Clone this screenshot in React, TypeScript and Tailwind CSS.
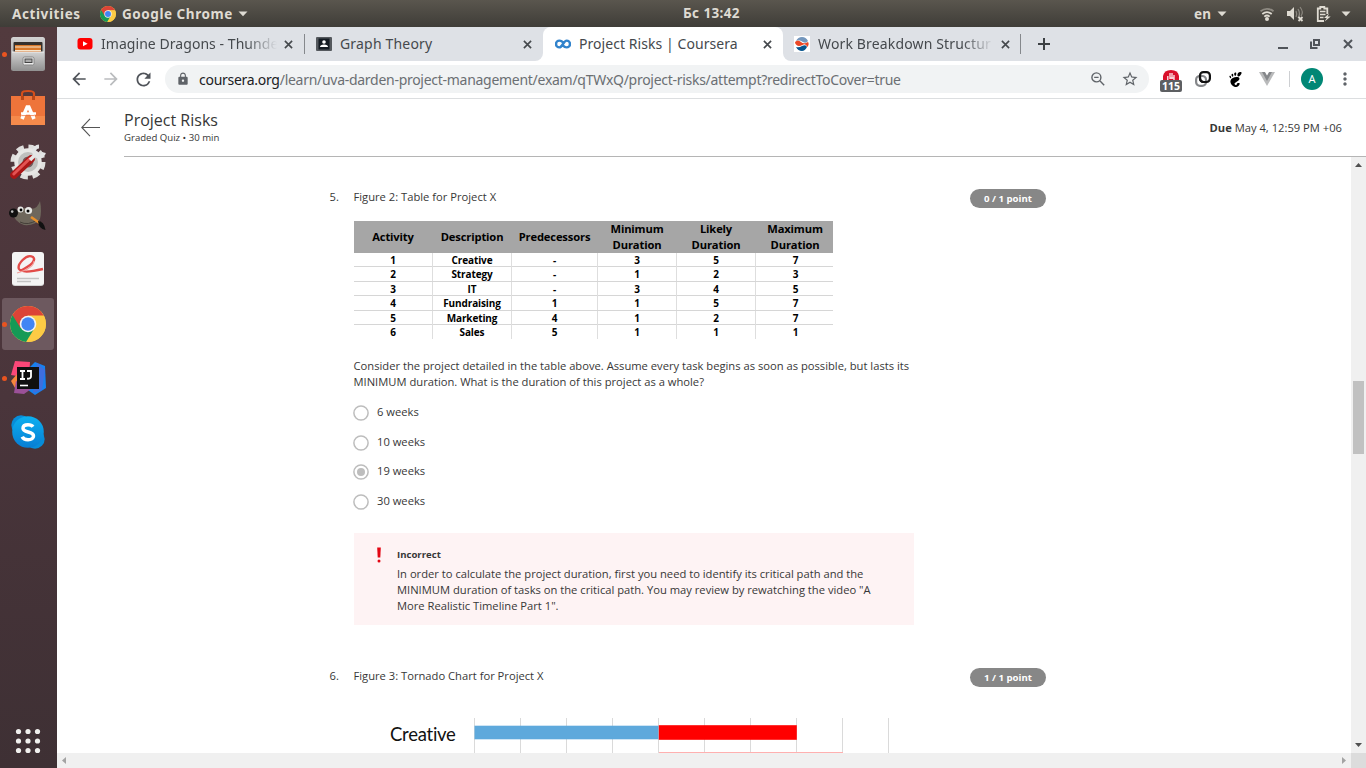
import React from "react";
import {
  MdArrowBack,
  MdArrowForward,
  MdRefresh,
  MdLock,
  MdStarBorder,
  MdMoreVert,
} from "react-icons/md";
import { SiGnome } from "react-icons/si";

function ChromeLogo({ className }: { className: string }) {
  return (
    <svg viewBox="0 0 36 36" className={className}>
      <circle cx="18" cy="18" r="18" fill="#fccb45" />
      <path d="M18 18 L2.4 9 A18 18 0 0 0 16 35.9 L24 23 Z" fill="#159a56" />
      <path d="M18 0 A18 18 0 0 1 33.8 9.5 L18 9.5 L10.5 22 L2.4 9 A18 18 0 0 1 18 0Z" fill="#dc4437" />
      <path d="M18 10H34A18 18 0 0 1 17 36L25.5 22Z" fill="#fccb45" />
      <circle cx="18" cy="18" r="8.3" fill="#f4f4f4" />
      <circle cx="18" cy="18" r="6.7" fill="#4285f4" />
    </svg>
  );
}

function Caret() {
  return (
    <svg viewBox="0 0 10 6" className="h-[6px] w-[10px]">
      <path d="M0.5 0.5h9L5 5.3z" fill="#dedbd3" />
    </svg>
  );
}

function TopBar() {
  return (
    <header className="flex h-[27px] shrink-0 items-center bg-linear-to-b from-[#5a564e] to-[#3f3d38] font-['Noto_Sans',sans-serif] text-[13.5px] font-bold text-[#dfdbd2]">
      <span className="ml-3 w-[88px] pt-px tracking-[0.6px]">Activities</span>
      <ChromeLogo className="size-4" />
      <span className="ml-[6px] w-[116px] pt-px tracking-[0.55px]">Google Chrome</span>
      <Caret />
      <span className="ml-[435px] w-[511px] tracking-[0.35px]">Бс 13:42</span>
      <span className="w-[23px] pt-px tracking-[0.3px]">en</span>
      <Caret />
      <svg viewBox="0 0 16 16" className="ml-[32px] size-4" fill="none" stroke="#dfdbd2" strokeWidth="1.8">
        <path d="M1.5 5.2Q8 0.4 14.5 5.2" stroke="#8d8981" />
        <path d="M3.3 8Q8 4.4 12.7 8" />
        <path d="M5.3 10.6Q8 8.5 10.7 10.6" />
        <circle cx="8" cy="13" r="2" fill="#dfdbd2" stroke="none" />
      </svg>
      <svg viewBox="0 0 18 16" className="ml-[12px] h-4 w-[18px]" fill="none" stroke="#8d8981" strokeWidth="1.2">
        <path d="M0 5h3l4-4v13l-4-4H0z" fill="#dfdbd2" stroke="none" />
        <path d="M9 5q1.5 3 0 6M11 3q3 4.5 0 9M13 1q4 5 1 9" />
        <path d="M11.5 11l4 4M15.5 11l-4 4" stroke="#dfdbd2" strokeWidth="1.8" />
      </svg>
      <svg viewBox="0 0 16 16" className="ml-[11px] size-4" fill="none" stroke="#dfdbd2" strokeWidth="1.8">
        <path d="M8 15H1.8V2.5h2.5V1h4v1.5h3V8" />
        <path d="M4 5.5h5.5M4 8.5h5.5M4 11.5h3.5" strokeWidth="1.5" />
        <path d="M13 7.5l-5 4.5h2.7l-2 3.5 6-5h-3z" fill="#dfdbd2" stroke="none" />
      </svg>
      <span className="ml-[9px] flex">
        <Caret />
      </span>
    </header>
  );
}

function DockItem({ running, active, children }: { running?: boolean; active?: boolean; children: React.ReactNode }) {
  return (
    <div className={active ? "relative ml-[2px] flex h-[52px] w-[52px] items-center justify-center rounded-[3px] bg-[#6d595f]" : "relative ml-[2px] flex h-[52px] w-[52px] items-center justify-center"}>
      {running && <span className="absolute top-[24px] left-0 size-[5px] rounded-full bg-[#e95420]" />}
      {children}
    </div>
  );
}

const icon = "size-[36px] overflow-visible";

function Dock() {
  return (
    <nav className="flex w-[57px] shrink-0 flex-col gap-[2px] bg-linear-to-b from-[#523a3e] via-[#4a353b] to-[#3e3034] pt-px">
      <DockItem running>
        <svg viewBox="0 0 36 36" className={icon}>
          <defs>
            <linearGradient id="cab" x2="0" y2="1"><stop stopColor="#d2d2d2" /><stop offset="1" stopColor="#929292" /></linearGradient>
          </defs>
          <rect x="1" y="1" width="34" height="34" rx="2.5" fill="url(#cab)" />
          <rect x="3.5" y="6" width="29" height="12" rx="1" fill="#35302c" />
          <path d="M5 9h26v8H5z" fill="#d9792a" />
          <path d="M5 11h26M5 14.5h26" stroke="#f7e5cc" strokeWidth="1.2" />
          <path d="M2 16h32v18H2z" fill="url(#cab)" />
          <path d="M2 16h32" stroke="#eee" />
          <rect x="13" y="21" width="11" height="8" rx="1.5" fill="#ececec" stroke="#858585" />
          <rect x="15" y="23" width="7" height="3.5" fill="#aaa" stroke="#444" />
        </svg>
      </DockItem>
      <DockItem>
        <svg viewBox="0 0 36 36" className={icon}>
          <path d="M12 9V3.5Q12 1 18 1t6 2.5V9" fill="none" stroke="#d54f1b" strokeWidth="2.2" />
          <path d="M1 6h34v28a1 1 0 0 1-1 1H2a1 1 0 0 1-1-1z" fill="#ee743a" />
          <path d="M1 26h34v9H1z" fill="#f58a4b" />
          <path d="M11 6h3v4h-3zM22 6h3v4h-3z" fill="#b94717" />
          <path d="M12 29L17.2 17h1.6L24 29" fill="none" stroke="#fff" strokeWidth="3.6" />
          <path d="M11 23.5h15" stroke="#fff" strokeWidth="2.5" />
          <path d="M12 25.6h12" stroke="#eb7440" strokeWidth="0.8" />
        </svg>
      </DockItem>
      <DockItem>
        <svg viewBox="0 0 36 36" className={icon}>
          <circle cx="18" cy="18" r="15.2" fill="none" stroke="#dfdfdd" strokeWidth="4.6" strokeDasharray="7.2 4.738" />
          <circle cx="18" cy="18" r="10" fill="#c8c9c7" stroke="#e7e7e5" strokeWidth="7.5" />
          <circle cx="18" cy="18" r="8" fill="none" stroke="#bfc0be" strokeWidth="4" />
          <circle cx="18" cy="18" r="5.5" fill="#705d5d" />
          <path d="M4 31L21 15" stroke="#aa1717" strokeWidth="7.5" strokeLinecap="round" />
          <path d="M3.8 30L20 14.5" stroke="#e35353" strokeWidth="3" strokeLinecap="round" />
          <path d="M20 16L28 8" stroke="#e6e6e6" strokeWidth="3.5" />
          <path d="M29 2.5a5 5 0 1 0 5 6" fill="none" stroke="#e3e5e5" strokeWidth="3.8" />
        </svg>
      </DockItem>
      <DockItem>
        <svg viewBox="0 0 36 36" className={icon}>
          <path d="M30 3Q27 12 20 10.5 13 9 9 12L2 13Q4 24 14 27 25 28 30 21 32 13 30 3Z" fill="#6e675c" />
          <path d="M10 24Q18 28 27 22" stroke="#443e38" fill="none" />
          <circle cx="10.5" cy="11.5" r="3" fill="#e9e9e6" /><circle cx="18.5" cy="12.5" r="3.6" fill="#e9e9e6" />
          <circle cx="11" cy="12" r="1.4" /><circle cx="18" cy="13" r="1.5" />
          <circle cx="3.5" cy="15" r="4.5" fill="#101010" /><circle cx="2.2" cy="13.6" r="1.3" fill="#bbb" />
          <path d="M21 19l10 7" stroke="#e7902d" strokeWidth="2.6" />
          <path d="M28 23q6 0 7.5 9-7-1-7.5-9z" fill="#111" />
        </svg>
      </DockItem>
      <DockItem>
        <svg viewBox="0 0 36 36" className={icon}>
          <rect x="2" y="2" width="32" height="32" rx="3" fill="#d0d0d0" />
          <rect x="2" y="0" width="32" height="33" rx="3" fill="#f4f4f4" />
          <path d="M10 19Q28 10 23 5C16 1 7 13 9 17Q12 22 33 17" fill="none" stroke="#e24b48" strokeWidth="2.4" />
          <path d="M7 21Q24 16 24 9" fill="none" stroke="#f2a09c" strokeWidth="1.2" />
          <path d="M7 26.5h22M7 29.5h14" stroke="#c3c3c3" strokeWidth="1.3" />
        </svg>
      </DockItem>
      <DockItem running active>
        <ChromeLogo className={icon} />
      </DockItem>
      <DockItem running>
        <svg viewBox="0 0 36 36" className={icon}>
          <path d="M5 1L20 2 19 18 1 15z" fill="#fb4778" />
          <path d="M1 21l7-8 5 12-8 3z" fill="#f6863c" />
          <path d="M19 8l6-6 10 4 1 22-11 7-7-5z" fill="#1681f0" />
          <path d="M27 3l8 7-3 20-9 3z" fill="#3f6edd" />
          <path d="M4 33l2-12 15 8-7 5z" fill="#9b5198" />
          <path d="M7 7h22v22H7z" fill="#101010" />
          <path d="M10 11h5M12.5 11v8M10 19h5M17 11h4v5.5q0 2.5-4 2.2" fill="none" stroke="#fff" strokeWidth="1.8" />
          <path d="M10 25.5h8" stroke="#fff" strokeWidth="1.6" />
        </svg>
      </DockItem>
      <DockItem>
        <svg viewBox="0 0 36 36" className={icon}>
          <defs><linearGradient id="sky" x2="0" y2="1"><stop stopColor="#0bb0f0" /><stop offset="1" stopColor="#087dd4" /></linearGradient></defs>
          <circle cx="11" cy="11" r="9.7" fill="#078dd9" /><circle cx="25" cy="25" r="9.7" fill="#078dd9" />
          <circle cx="18" cy="18" r="15.8" fill="url(#sky)" />
          <path d="M23 12.8Q21.5 10.7 18 10.7c-4 0-5 2-5 3.5 0 5 10.5 2.5 10.5 7.8 0 2-2 3.8-5.5 3.8-3.3 0-5-1.3-5.8-3" fill="none" stroke="#fff" strokeWidth="3.5" />
        </svg>
      </DockItem>
      <svg viewBox="0 0 26 26" className="mt-auto mb-[14px] ml-[15px] size-[26px]" fill="#f1f0ee">
        {[3.5, 13, 22.5].map((y) => [3.5, 13, 22.5].map((x) => <circle key={`${x}-${y}`} cx={x} cy={y} r="2.6" />))}
      </svg>
    </nav>
  );
}

function CloseX({ className }: { className: string }) {
  return (
    <svg viewBox="0 0 10 10" className={className} stroke="#45494d" strokeWidth="1.8">
      <path d="M1 1l8 8M9 1l-8 8" />
    </svg>
  );
}

function TabStrip() {
  return (
    <div className="flex h-[34px] bg-white font-['Noto_Sans',sans-serif] text-[14px] text-[#45494d]">
      <div className="flex w-[486px] items-center rounded-br-[8px] bg-[#dee1e6]">
        <svg viewBox="0 0 16 12" className="ml-[20px] h-3 w-4">
          <rect width="15" height="11.5" x="0.5" rx="3" fill="#f00" /><path d="M6 3.2v5l4.6-2.5z" fill="#fff" />
        </svg>
        <div className="ml-2 w-[176px] overflow-hidden mask-r-from-82% pb-[2px] tracking-[0.05px] whitespace-nowrap">Imagine Dragons - Thunde</div>
        <CloseX className="ml-[7px] size-[9px]" />
        <div className="ml-[11px] h-5 w-px bg-[#85888c]" />
        <svg viewBox="0 0 16 16" className="ml-[11px] size-4">
          <rect y="1" width="16" height="14" rx="1" fill="#55595e" /><rect x="2.5" y="2.5" width="11" height="11" fill="#151c23" />
          <circle cx="8" cy="6" r="1.8" fill="#fff" /><path d="M4 11q0-2.5 4-2.5t4 2.5z" fill="#fff" />
        </svg>
        <div className="ml-2 w-[183px] pb-[2px] tracking-[0.18px] whitespace-nowrap">Graph Theory</div>
        <CloseX className="size-[9px]" />
      </div>
      <div className="w-[240px] bg-[#dee1e6]">
        <div className="flex h-full items-center rounded-t-[8px] bg-white">
          <svg viewBox="0 0 16 10" className="ml-3 h-[10px] w-4" fill="none" stroke="#3183cc" strokeWidth="2.4">
            <path d="M8.3 4C7.2 2 6 1.6 4.4 1.6a3.4 3.4 0 0 0 0 6.8C7.4 8.4 8.6 1.6 11.6 1.6a3.4 3.4 0 0 1 0 6.8C10.2 8.4 9 7.8 8 6.6" />
          </svg>
          <div className="ml-2 w-[184px] pb-[2px] tracking-[0.06px] whitespace-nowrap">Project Risks | Coursera</div>
          <CloseX className="size-[9px]" />
        </div>
      </div>
      <div className="flex flex-1 items-center rounded-bl-[8px] bg-[#dee1e6]">
        <svg viewBox="0 0 16 16" className="ml-[11px] size-4">
          <rect width="16" height="16" fill="#fff" />
          <path d="M2 5Q4 1 8 1t6 4q-2 3-5 1Q5 3 2 5z" fill="#7497bd" />
          <path d="M1 6q3-3 6 0 2 2 5 1l2-1q1.5 2-.5 5-2-4-5-2-4 2-6 0Q1 8 1 6z" fill="#eb4826" />
          <path d="M2 11q3 1 6-1 4-2 5 1-2 4-5 4-4 0-6-4z" fill="#07558e" />
        </svg>
        <div className="ml-2 w-[176px] overflow-hidden mask-r-from-82% pb-[2px] tracking-[0.15px] whitespace-nowrap">Work Breakdown Structur</div>
        <CloseX className="ml-[7px] size-[9px]" />
        <div className="ml-[10px] h-5 w-px bg-[#85888c]" />
        <svg viewBox="0 0 12 12" className="ml-[17px] size-3" stroke="#3c4043" strokeWidth="2"><path d="M6 0v12M0 6h12" /></svg>
        <svg viewBox="0 0 10 10" className="mr-[22px] ml-auto size-[10px]" stroke="#50545a" strokeWidth="2"><path d="M0 9h10" /></svg>
        <svg viewBox="0 0 10 10" className="mr-[23px] size-[10px]" fill="none" stroke="#50545a" strokeWidth="2"><path d="M4 1h5v5H4zM1 2.5V9h6.5" /></svg>
        <svg viewBox="0 0 10 10" className="mr-[13px] size-[10px]" stroke="#50545a" strokeWidth="2"><path d="M1 1l8 8M9 1l-8 8" /></svg>
      </div>
    </div>
  );
}

function Toolbar() {
  return (
    <div className="flex h-[38px] items-center border-b border-[#dcdee0] pb-px text-[#5f6368]">
      <MdArrowBack className="ml-3 size-5 text-[#50545a]" />
      <MdArrowForward className="ml-3 size-5 text-[#babcbe]" />
      <MdRefresh className="ml-[12px] size-[21px] text-[#50545a]" />
      <div className="ml-[11px] flex h-7 w-[984px] items-center rounded-full bg-[#f1f3f4]">
        <MdLock className="ml-[11px] size-[14px]" />
        <span className="ml-[9px] w-[892px] font-['Noto_Sans',sans-serif] text-[14px] tracking-[-0.28px] whitespace-nowrap text-[#6b6f73]">
          <span className="text-[#202124]">coursera.org</span>/learn/uva-darden-project-management/exam/qTWxQ/project-risks/attempt?redirectToCover=true
        </span>
        <svg viewBox="0 0 14 14" className="size-[14px] shrink-0" fill="none" stroke="#5f6368" strokeWidth="1.4">
          <circle cx="5.4" cy="5.4" r="4.5" />
          <path d="M3.2 5.4h4.4M8.8 8.8l4.4 4.4" />
        </svg>
        <MdStarBorder className="ml-[16px] size-[18px] shrink-0" />
      </div>
      <div className="ml-[11px] flex h-full w-[22px] flex-col items-center pt-[9px]">
        <svg viewBox="0 0 16 10" className="h-[10px] w-4 shrink-0">
          <path d="M0 10V6Q1 0 8 0t8 6v4z" fill="#d9102b" />
          <path d="M4.8 10V6M7 9V3M9 9V3M11 10V5M7 8h4" stroke="#fff" strokeWidth="1.2" />
        </svg>
        <span className="flex h-3 w-[22px] shrink-0 items-center justify-center rounded-[2px] bg-[#5d5f62] font-['Noto_Sans',sans-serif] text-[10.5px] leading-none font-bold text-white">115</span>
      </div>
      <svg viewBox="0 0 16 16" className="ml-[13px] size-4" fill="none" strokeWidth="2.2">
        <rect x="1.1" y="5" width="9.9" height="9.9" rx="3.8" stroke="#85878a" />
        <rect x="5" y="1.1" width="9.9" height="9.9" rx="3.4" stroke="#111" />
        <path d="M5 6v1q0 4 4 4" stroke="#111" />
      </svg>
      <SiGnome className="ml-[17px] size-[15px] text-black" />
      <svg viewBox="0 0 16 14" className="ml-[16px] h-[14px] w-4">
        <path d="M0 0h16L8 14z" fill="#b9babb" /><path d="M3 0h3.5L8 3l1.5-3H13L8 9z" fill="#85878a" /><path d="M6 0h4L8 3.5z" fill="#fff" />
      </svg>
      <div className="ml-[14px] h-4 w-px bg-[#cdcfd2]" />
      <span className="ml-[11px] flex size-[22px] items-center justify-center rounded-full bg-[#018775] font-['Noto_Sans',sans-serif] text-[11px] text-white">A</span>
      <MdMoreVert className="ml-[12px] size-[20px]" />
    </div>
  );
}

function Pill({ children }: { children: React.ReactNode }) {
  return (
    <span className="flex h-[19px] w-[76px] items-center justify-center rounded-full bg-[#878787] text-[9.6px] font-bold text-white">{children}</span>
  );
}

function QuestionHead({ number, title, score }: { number: string; title: string; score: string }) {
  return (
    <div className="flex h-4 items-start leading-4">
      <span className="w-6">{number}</span>
      <span className="w-[616.5px]">{title}</span>
      <Pill>{score}</Pill>
    </div>
  );
}

const rows = [
  ["1", "Creative", "-", "3", "5", "7"],
  ["2", "Strategy", "-", "1", "2", "3"],
  ["3", "IT", "-", "3", "4", "5"],
  ["4", "Fundraising", "1", "1", "5", "7"],
  ["5", "Marketing", "4", "1", "2", "7"],
  ["6", "Sales", "5", "1", "1", "1"],
];

const columns = "grid grid-cols-[79px_79px_86px_79px_79px_77px]";

function ActivityTable() {
  return (
    <div className="mt-4 ml-[24px] w-[479px] text-center font-['Open_Sans',sans-serif] text-[10px] font-bold tracking-[-0.12px] text-black">
      <div className={`${columns} h-8 items-center bg-[#a6a6a6] text-[11.2px] leading-4 tracking-[-0.15px]`}>
        <span className="-mt-px">Activity</span>
        <span className="-mt-px">Description</span>
        <span className="-mt-px">Predecessors</span>
        <span className="-mt-px">Minimum<br />Duration</span>
        <span className="-mt-px">Likely<br />Duration</span>
        <span className="-mt-px pl-[2px]">Maximum<br />Duration</span>
      </div>
      {rows.map((row) => (
        <div key={row[0]} className={`${columns} h-[14.4px] border-b border-[#d6d6d6] leading-[14px] last:border-b-0`}>
          {row.map((cell, i) => (
            <span key={i} className="border-r border-[#dedede] pl-px last:border-r-0 last:pl-[3px]">{cell}</span>
          ))}
        </div>
      ))}
    </div>
  );
}

function Option({ label, selected }: { label: string; selected?: boolean }) {
  return (
    <label className="flex h-[29.7px] items-center gap-2">
      <svg viewBox="0 0 16 16" className="size-4" fill="none" stroke="#bdbdbd" strokeWidth="1.5">
        <circle cx="8" cy="8" r="7.1" />
        {selected && <circle cx="8" cy="8" r="4" fill="#bdbdbd" stroke="none" />}
      </svg>
      <span className="-mt-px">{label}</span>
    </label>
  );
}

function Chart() {
  return (
    <div className="mt-[34px] ml-[60.5px] flex">
      <span className="w-[83.5px] pt-1 font-['Lato',sans-serif] text-[18.5px] leading-6 tracking-[-0.25px] text-[#111]">Creative</span>
      <svg viewBox="0 0 420 36" className="h-9 w-[420px]">
        {[0, 1, 2, 3, 4, 5, 6, 7, 8, 9].map((i) => (
          <path key={i} d={`M${i * 46 + 0.5} 0v36`} stroke="#dadada" />
        ))}
        <rect x="0.5" y="7.7" width="184" height="13.6" fill="#5ea9dc" />
        <rect x="184.8" y="7.2" width="138" height="14.6" fill="#f00" />
        <path d="M185 34.5h184" stroke="#ffb0b0" />
      </svg>
    </div>
  );
}

function Quiz() {
  return (
    <main className="h-[596px] flex-1 overflow-hidden pt-[32px] pl-[272.5px]">
      <QuestionHead number="5." title="Figure 2: Table for Project X" score="0 / 1 point" />
      <ActivityTable />
      <p className="mt-[19px] ml-6 w-[570px] leading-4">
        Consider the project detailed in the table above. Assume every task begins as soon as possible, but lasts its
        <br />
        MINIMUM duration. What is the duration of this project as a whole?
      </p>
      <div className="mt-[7.7px] ml-[23.5px]">
        <Option label="6 weeks" />
        <Option label="10 weeks" />
        <Option label="19 weeks" selected />
        <Option label="30 weeks" />
      </div>
      <section className="mt-[16.3px] ml-6 flex h-[92px] w-[560px] bg-[#fef3f4] pt-[14px] leading-4">
        <svg viewBox="0 0 6 16" className="ml-[22px] h-4 w-[6px]" fill="#e30613">
          <path d="M1.2 0.5h3.6l-.5 10H1.7z" /><circle cx="3" cy="14" r="1.5" />
        </svg>
        <div className="ml-[15.5px]">
          <h3 className="text-[9.6px] font-bold">Incorrect</h3>
          <p className="mt-[3px] whitespace-nowrap">
            In order to calculate the project duration, first you need to identify its critical path and the
            <br />
            MINIMUM duration of tasks on the critical path. You may review by rewatching the video "A
            <br />
            More Realistic Timeline Part 1".
          </p>
        </div>
      </section>
      <div className="h-[43px]" />
      <QuestionHead number="6." title="Figure 3: Tornado Chart for Project X" score="1 / 1 point" />
      <Chart />
    </main>
  );
}

export default function App() {
  return (
    <div className="flex h-[768px] w-[1366px] flex-col overflow-hidden">
      <TopBar />
      <div className="flex min-h-0 flex-1">
        <Dock />
        <div className="flex min-w-0 flex-1 flex-col bg-white">
          <TabStrip />
          <Toolbar />
          <div className="flex h-[596px] flex-1 flex-col font-['Open_Sans',sans-serif] text-[11.2px] text-[#373737]">
            <div className="flex h-[58px] shrink-0">
              <div className="flex w-[67px] pt-[19px] pl-[24px]">
                <svg viewBox="0 0 20 20" className="size-5" fill="none" stroke="#555" strokeWidth="1.1">
                  <path d="M0.8 9.5H19M9 0.8L0.8 9.5 9 18.2" />
                </svg>
              </div>
              <div className="flex flex-1 justify-between border-b border-[#b5b5b5] pr-6">
                <div className="pt-[10px]">
                  <h1 className="text-[16px] leading-[22px]">Project Risks</h1>
                  <p className="text-[9.6px] leading-[13px]">Graded Quiz • 30 min</p>
                </div>
                <p className="pt-[21px] leading-4"><b>Due</b> May 4, 12:59 PM +06</p>
              </div>
            </div>
            <div className="flex h-[596px] shrink-0">
              <Quiz />
              <div className="flex w-[15px] flex-col items-center bg-[#f0f0f0]">
                <svg viewBox="0 0 7 4" className="mt-[6px] h-1 w-[7px]"><path d="M3.5 0L7 4H0z" fill="#505050" /></svg>
                <div className="mt-[214px] h-[73px] w-[11px] bg-[#c1c1c1]" />
                <svg viewBox="0 0 7 4" className="mt-auto mb-[6px] h-1 w-[7px]"><path d="M0 0h7L3.5 4z" fill="#505050" /></svg>
              </div>
            </div>
            <div className="flex h-[15px] shrink-0 items-center bg-[#f0f0f0]">
              <svg viewBox="0 0 4 7" className="ml-[5px] h-[7px] w-1"><path d="M4 0v7L0 3.5z" fill="#a3a3a3" /></svg>
              <svg viewBox="0 0 4 7" className="mr-[5px] ml-auto h-[7px] w-1"><path d="M0 0v7l4-3.5z" fill="#a3a3a3" /></svg>
              <div className="h-full w-[15px] bg-[#dcdcdc]" />
            </div>
          </div>
        </div>
      </div>
    </div>
  );
}
